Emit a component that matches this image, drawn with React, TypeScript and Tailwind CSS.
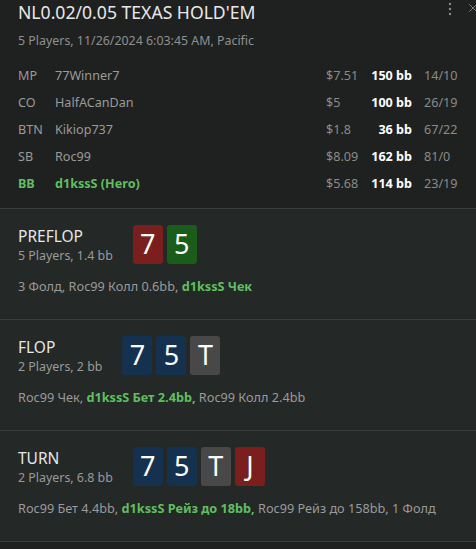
import { X } from 'lucide-react'

type Player = { pos: string; name: string; cash: string; bb: string; stats: string; hero?: boolean }

const players: Player[] = [
  { pos: 'MP', name: '77Winner7', cash: '$7.51', bb: '150 bb', stats: '14/10' },
  { pos: 'CO', name: 'HalfACanDan', cash: '$5', bb: '100 bb', stats: '26/19' },
  { pos: 'BTN', name: 'Kikiop737', cash: '$1.8', bb: '36 bb', stats: '67/22' },
  { pos: 'SB', name: 'Roc99', cash: '$8.09', bb: '162 bb', stats: '81/0' },
  { pos: 'BB', name: 'd1kssS (Hero)', cash: '$5.68', bb: '114 bb', stats: '23/19', hero: true },
]

type Card = { rank: string; color: 'red' | 'green' | 'blue' | 'gray' }

const cardBg: Record<Card['color'], string> = {
  red: 'bg-[#7a1e1e]',
  green: 'bg-[#1a5c1a]',
  blue: 'bg-[#14314f]',
  gray: 'bg-[#484848]',
}

type Action = { text: string; hero?: boolean }

interface Street {
  name: string
  info: string
  cards: Card[]
  actions: Action[]
}

const streets: Street[] = [
  {
    name: 'PREFLOP',
    info: '5 Players, 1.4 bb',
    cards: [
      { rank: '7', color: 'red' },
      { rank: '5', color: 'green' },
    ],
    actions: [{ text: '3 Фолд, Roc99 Колл 0.6bb, ' }, { text: 'd1kssS Чек', hero: true }],
  },
  {
    name: 'FLOP',
    info: '2 Players, 2 bb',
    cards: [
      { rank: '7', color: 'blue' },
      { rank: '5', color: 'blue' },
      { rank: 'T', color: 'gray' },
    ],
    actions: [
      { text: 'Roc99 Чек, ' },
      { text: 'd1kssS Бет 2.4bb,', hero: true },
      { text: ' Roc99 Колл 2.4bb' },
    ],
  },
  {
    name: 'TURN',
    info: '2 Players, 6.8 bb',
    cards: [
      { rank: '7', color: 'blue' },
      { rank: '5', color: 'blue' },
      { rank: 'T', color: 'gray' },
      { rank: 'J', color: 'red' },
    ],
    actions: [
      { text: 'Roc99 Бет 4.4bb, ' },
      { text: 'd1kssS Рейз до 18bb,', hero: true },
      { text: ' Roc99 Рейз до 158bb, 1 Фолд' },
    ],
  },
]

function StreetBlock({ street }: { street: Street }) {
  return (
    <div className="border-b border-[#3a3d3c] bg-[#242827] px-[18px] pt-4 pb-[24px]">
      <div className="flex items-center gap-5">
        <div className="flex flex-col">
          <div className="text-[15.5px] leading-[22px] text-[#e6e6e6]">{street.name}</div>
          <div className="text-[12.4px] leading-[17px] text-[#9a9a9a]">{street.info}</div>
        </div>
        <div className="flex gap-1">
          {street.cards.map((c, i) => (
            <div
              key={i}
              className={`flex h-[39px] w-[30px] items-center justify-center rounded-[3px] text-[27px] text-white ${cardBg[c.color]}`}
            >
              {c.rank}
            </div>
          ))}
        </div>
      </div>
      <div className="mt-[13px] text-[12.7px] leading-[18px] text-[#9a9a9a]">
        {street.actions.map((a, i) =>
          a.hero ? (
            <span key={i} className="font-bold text-[#5fbf5f]">
              {a.text}
            </span>
          ) : (
            <span key={i}>{a.text}</span>
          )
        )}
      </div>
    </div>
  )
}

export default function App() {
  return (
    <div
      className="h-[549px] w-[476px] overflow-hidden bg-[#1e2120]"
      style={{ fontFamily: '"Noto Sans", "Open Sans", sans-serif' }}
    >
      <div className="relative border-b border-[#3a3d3c] px-[18px] pb-[10px]">
        <div className="text-[17.6px] leading-[24px] text-[#e8e8e8]">NL0.02/0.05 TEXAS HOLD'EM</div>
        <div className="mt-[5px] text-[12.4px] leading-[24px] text-[#8f8f8f]">
          5 Players, 11/26/2024 6:03:45 AM, Pacific
        </div>
        <div className="absolute top-0 left-[448px] flex items-start gap-[14px]">
          <svg width="4" height="14" viewBox="0 0 4 14" className="mt-[2px]">
            <circle cx="2" cy="2" r="1.2" fill="#8a8a8a" />
            <circle cx="2" cy="7" r="1.2" fill="#8a8a8a" />
            <circle cx="2" cy="12" r="1.2" fill="#8a8a8a" />
          </svg>
          <X size={14} color="#8a8a8a" strokeWidth={1.5} className="mt-[1px] shrink-0" />
        </div>
        <div className="mt-[10px] flex flex-col">
          {players.map((p) => (
            <div
              key={p.pos}
              className={`flex h-[27px] items-center text-[12.6px] ${p.hero ? 'font-bold text-[#5fbf5f]' : 'text-[#9a9a9a]'}`}
            >
              <div className="w-[37px]">{p.pos}</div>
              <div className="flex-1">{p.name}</div>
              <div className="w-[34px] font-normal text-[#8a8a8a]">{p.cash}</div>
              <div className="w-[52px] text-right font-bold text-white">{p.bb}</div>
              <div className="ml-3 w-[34px] font-normal text-[#8a8a8a]">{p.stats}</div>
            </div>
          ))}
        </div>
      </div>
      {streets.map((s) => (
        <StreetBlock key={s.name} street={s} />
      ))}
    </div>
  )
}
